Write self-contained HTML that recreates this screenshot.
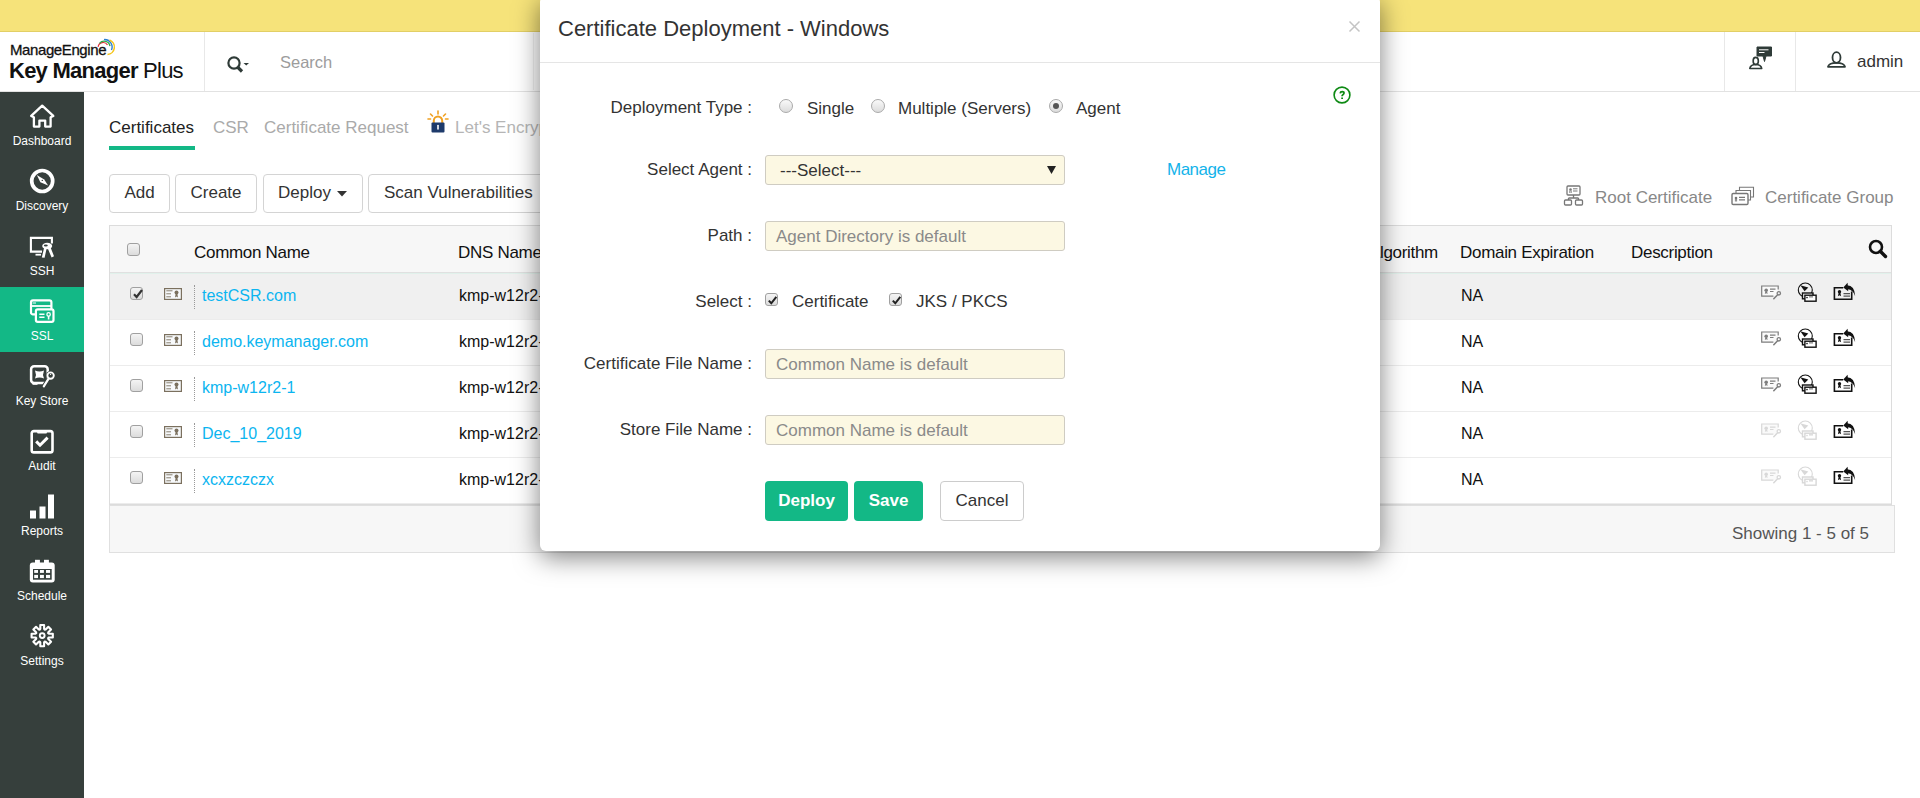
<!DOCTYPE html>
<html><head><meta charset="utf-8">
<style>
*{box-sizing:border-box;margin:0;padding:0}
html,body{width:1920px;height:798px;overflow:hidden;background:#fff;font-family:"Liberation Sans",sans-serif;color:#222;position:relative}
.abs{position:absolute}
svg{position:absolute;overflow:visible}
#ybar{left:0;top:0;width:1920px;height:32px;background:#f6e37a;border-bottom:1px solid #e2cf66}
#hdr{left:0;top:32px;width:1920px;height:60px;background:#fff;border-bottom:1px solid #e2e2e2}
#side{left:0;top:92px;width:84px;height:706px;background:#363f3c}
.nav{position:absolute;left:0;width:84px;height:65px;color:#fff;font-size:12px;text-align:center}
.nav span{position:absolute;left:0;width:84px;text-align:center}
.nav.act{background:#13b886}
.tab{position:absolute;top:118px;font-size:17px;color:#aaa;white-space:nowrap}
.btn{position:absolute;top:174px;height:39px;border:1px solid #d4d4d4;border-radius:4px;background:#fff;font-size:17px;color:#333;line-height:35px;text-align:center;white-space:nowrap}
#tbl{left:109px;top:225px;width:1783px;height:280px;border:1px solid #dcdcdc;background:#fff}
#thead{left:0;top:0;width:1781px;height:47px;background:#f7f7f7;border-bottom:1px solid #e0e0e0;box-shadow:0 1px 0 #e1f1eb}
.row{position:absolute;left:0;width:1781px;height:46px;border-bottom:1px solid #ececec}
.row.sel{background:#f0f0f0}
.th{position:absolute;font-size:17px;color:#111;top:16.5px;white-space:nowrap;letter-spacing:-0.3px}
.td{position:absolute;font-size:16px;color:#111;top:12.5px;white-space:nowrap}
.lnk{color:#0bb5f0}
.cb{position:absolute;width:13px;height:13px;border:1px solid #a0a0a0;border-radius:3px;background:linear-gradient(#f4f4f4,#dcdcdc)}
.sep{position:absolute;left:84px;top:11px;width:0;height:24px;border-left:1px dotted #999}
#foot{left:109px;top:505px;width:1786px;height:48px;background:#f7f7f7;border:1px solid #e0e0e0}
#modal{left:540px;top:-4px;width:840px;height:555px;background:#fff;border-radius:6px;box-shadow:0 6px 26px rgba(0,0,0,.5)}
.lbl{position:absolute;font-size:17px;color:#333;white-space:nowrap;text-align:right;width:300px}
.inp{position:absolute;left:225px;width:300px;height:30px;background:#fcf8e3;border:1px solid #cfccc2;border-radius:3px;font-size:17px;color:#8a8a8a;padding-left:10px;line-height:29px;white-space:nowrap}
.gbtn{position:absolute;top:487px;height:40px;background:#13b886;border-radius:4px;color:#fff;font-size:17px;font-weight:bold;text-align:center;line-height:40px}
.rad{position:absolute;width:14px;height:14px;border-radius:50%;border:1px solid #aaa;background:linear-gradient(#fafafa,#dcdcdc)}
.opt{position:absolute;font-size:17px;color:#333;white-space:nowrap}
</style></head><body>
<div id="ybar" class="abs"></div>
<div id="hdr" class="abs">
  <div class="abs" style="left:204px;top:0;width:1px;height:59px;background:#e8e8e8"></div>
  <div class="abs" id="me" style="left:10px;top:9px;font-size:15px;color:#111;letter-spacing:-0.4px;-webkit-text-stroke:0.3px #111">ManageEngine</div>
  <svg style="left:90px;top:4px" width="30" height="24" viewBox="0 0 30 24"><path d="M8.1 10.8 A5.1 5.1 0 0 1 17.5 9" fill="none" stroke="#e0303a" stroke-width="1.2"/><path d="M9.5 7.4 A6 6 0 0 1 20 10.2" fill="none" stroke="#2fa84a" stroke-width="1.3"/><path d="M14 3.6 A7.5 7.5 0 0 1 21.5 14" fill="none" stroke="#2b7fd0" stroke-width="1.4"/><path d="M19.5 4 A7.5 7.5 0 0 1 17.5 18.5" fill="none" stroke="#f5c518" stroke-width="1.5"/></svg>
  <div class="abs" id="kmp" style="left:9px;top:26px;font-size:22px;color:#111;letter-spacing:-0.75px;white-space:nowrap"><b>Key Manager</b> Plus</div>
  <svg style="left:226px;top:23px" width="26" height="20" viewBox="0 0 26 20"><circle cx="8" cy="8" r="5.6" fill="none" stroke="#2f3b38" stroke-width="2.2"/><path d="M11.5 12 L16 16.5" stroke="#2f3b38" stroke-width="3.2"/><path d="M17.5 8 H23 L20.25 10.6 Z" fill="#2f3b38"/></svg>
  <div class="abs" style="left:280px;top:21px;font-size:16.5px;color:#9c9c9c">Search</div>
  <div class="abs" style="left:533px;top:1px;width:1px;height:57px;background:#f0f0f0"></div>
  <div class="abs" style="left:1724px;top:0;width:1px;height:59px;background:#e8e8e8"></div>
  <div class="abs" style="left:1795px;top:0;width:1px;height:59px;background:#e8e8e8"></div>
  <svg style="left:1748px;top:14px" width="26" height="24" viewBox="0 0 26 24"><path d="M9 1 H23.5 V10 H18 L16.5 15.5 L15 10 H9 Z" fill="#2f3b38" stroke="#2f3b38" stroke-width="1" stroke-linejoin="round"/><path d="M11 3.8 H20.5 M11 6.5 H16.5" stroke="#fff" stroke-width="1"/><ellipse cx="7.75" cy="15" rx="2.6" ry="3.6" fill="none" stroke="#2f3b38" stroke-width="1.6"/><path d="M1.8 22.5 Q2.5 18.5 7.75 18.5 Q13 18.5 13.7 22.5 Z" fill="none" stroke="#2f3b38" stroke-width="1.6" stroke-linejoin="round"/></svg>
  <svg style="left:1826px;top:18px" width="22" height="20" viewBox="0 0 22 20"><ellipse cx="10.5" cy="7.5" rx="4" ry="5.3" fill="none" stroke="#2f3b38" stroke-width="1.8"/><path d="M2 16.8 Q2.8 12.8 10.5 12.8 Q18.2 12.8 19 16.8 Z" fill="none" stroke="#2f3b38" stroke-width="1.8" stroke-linejoin="round"/></svg>
  <div class="abs" style="left:1857px;top:20px;font-size:17px;color:#333">admin</div>
</div>
<div id="side" class="abs">
  <div class="nav" style="top:0"><svg style="left:29px;top:11px" width="26" height="26" viewBox="0 0 26 26"><path d="M13.2 2.6 L2.2 12.9 L4.9 14.2 V23.6 H10.4 V17.6 H16.2 V23.6 H21.6 V14.2 L24.3 12.9 Z" fill="none" stroke="#fff" stroke-width="2.3" stroke-linejoin="round"/></svg><span style="top:42px">Dashboard</span></div>
  <div class="nav" style="top:65px"><svg style="left:29px;top:11px" width="26" height="26" viewBox="0 0 26 26"><circle cx="13.2" cy="13" r="10.5" fill="none" stroke="#fff" stroke-width="3.7"/><path d="M7.8 7 L15.2 11.4 L19.1 17.6 L11.4 14.2 Z" fill="#fff"/><circle cx="13.3" cy="12.4" r="0.7" fill="#363f3c"/></svg><span style="top:42px">Discovery</span></div>
  <div class="nav" style="top:130px"><svg style="left:29px;top:11px" width="26" height="26" viewBox="0 0 26 26"><path d="M13 18.6 H1.9 V4.9 H22.9 V10.5" fill="none" stroke="#fff" stroke-width="2.1"/><path d="M6.5 21.7 H12" stroke="#fff" stroke-width="1.8"/><ellipse cx="18.2" cy="13" rx="5" ry="3.2" fill="#fff"/><ellipse cx="16.8" cy="12.6" rx="2" ry="1" fill="#363f3c"/><path d="M15.2 14.5 L12.8 24.5 L15.6 24.8 L17.6 15.5 Z M18.6 15 L22.6 24.6 L25 23.2 L21.4 14 Z" fill="#fff"/></svg><span style="top:42px">SSH</span></div>
  <div class="nav act" style="top:195px"><svg style="left:29px;top:11px" width="28" height="28" viewBox="0 0 28 28"><rect x="2" y="2.3" width="20.4" height="14.1" rx="2" fill="none" stroke="#fff" stroke-width="2.2"/><path d="M2.5 8 H22" stroke="#fff" stroke-width="1.8"/><path d="M3.6 5 H7" stroke="#fff" stroke-width="1"/><rect x="6.9" y="11.3" width="17.6" height="12.5" rx="1.8" fill="#13b886" stroke="#fff" stroke-width="2.2"/><path d="M10.3 16.2 H15.5 M10.3 19.2 H15.5" stroke="#fff" stroke-width="1.4"/><circle cx="19.6" cy="16.4" r="1.7" fill="none" stroke="#fff" stroke-width="1.3"/><path d="M19.6 18 V21.5" stroke="#fff" stroke-width="1.6"/></svg><span style="top:42px">SSL</span></div>
  <div class="nav" style="top:260px"><svg style="left:29px;top:11px" width="26" height="26" viewBox="0 0 26 26"><rect x="2.1" y="3.3" width="16.6" height="16.6" rx="3" fill="none" stroke="#fff" stroke-width="2.5"/><path d="M3.5 21 H8.5" stroke="#fff" stroke-width="1.6"/><path d="M6 7.5 Q10.5 9.3 15 7.5 Q13.2 11.5 15 15.5 Q10.5 13.7 6 15.5 Q7.8 11.5 6 7.5 Z" fill="#fff"/><path d="M19.5 15.8 L14.5 23.8" stroke="#363f3c" stroke-width="4.2" stroke-linecap="round"/><circle cx="21.6" cy="12.6" r="4.6" fill="#363f3c"/><circle cx="21.6" cy="12.6" r="3.2" fill="none" stroke="#fff" stroke-width="1.9"/><path d="M19.6 15.6 L14.8 23.4" stroke="#fff" stroke-width="2.2" stroke-linecap="round"/><path d="M21.6 10.8 V12" stroke="#fff" stroke-width="1"/></svg><span style="top:42px">Key Store</span></div>
  <div class="nav" style="top:325px"><svg style="left:29px;top:11px" width="26" height="26" viewBox="0 0 26 26"><rect x="2.7" y="3.1" width="20.8" height="21.3" rx="2.2" fill="none" stroke="#fff" stroke-width="2.6"/><path d="M7.8 3.5 H18.3 L17.5 5.6 H8.6 Z" fill="#fff"/><path d="M7.2 13.4 L11 17.2 L18.6 9.6" fill="none" stroke="#fff" stroke-width="3"/></svg><span style="top:42px">Audit</span></div>
  <div class="nav" style="top:390px"><svg style="left:29px;top:11px" width="26" height="26" viewBox="0 0 26 26"><rect x="1" y="17.5" width="6" height="8" fill="#fff"/><rect x="10.5" y="13.5" width="6" height="12" fill="#fff"/><rect x="19" y="1.5" width="6" height="24" fill="#fff"/></svg><span style="top:42px">Reports</span></div>
  <div class="nav" style="top:455px"><svg style="left:29px;top:11px" width="26" height="26" viewBox="0 0 26 26"><rect x="0.8" y="4.4" width="24.9" height="20.1" rx="3" fill="#fff"/><rect x="4" y="11" width="18.7" height="10.7" fill="#363f3c"/><g fill="#fff"><rect x="5.2" y="12" width="3.8" height="2.9"/><rect x="11" y="12" width="3.9" height="2.9"/><rect x="17" y="12" width="4.1" height="2.9"/><rect x="5.2" y="16.9" width="3.8" height="3.2"/><rect x="11" y="16.9" width="3.9" height="3.2"/><rect x="17" y="16.9" width="4.1" height="3.2"/><rect x="6" y="1.8" width="4.9" height="6.2"/><rect x="15" y="1.8" width="4.9" height="6.2"/></g></svg><span style="top:42px">Schedule</span></div>
  <div class="nav" style="top:520px"><svg style="left:29px;top:11px" width="26" height="26" viewBox="0 0 26 26"><path d="M11.30 5.86 L11.30 1.97 L15.10 1.97 L15.10 5.86 L15.65 6.69 L16.62 6.49 L19.37 3.74 L22.06 6.43 L19.31 9.18 L19.11 10.15 L19.94 10.70 L23.83 10.70 L23.83 14.50 L19.94 14.50 L19.11 15.05 L19.31 16.02 L22.06 18.77 L19.37 21.46 L16.62 18.71 L15.65 18.51 L15.10 19.34 L15.10 23.23 L11.30 23.23 L11.30 19.34 L10.75 18.51 L9.78 18.71 L7.03 21.46 L4.34 18.77 L7.09 16.02 L7.29 15.05 L6.46 14.50 L2.57 14.50 L2.57 10.70 L6.46 10.70 L7.29 10.15 L7.09 9.18 L4.34 6.43 L7.03 3.74 L9.78 6.49 L10.75 6.69 Z" fill="none" stroke="#fff" stroke-width="2.1" stroke-linejoin="round"/><circle cx="13.2" cy="12.6" r="2.4" fill="none" stroke="#fff" stroke-width="1.9"/></svg><span style="top:42px">Settings</span></div>
</div>
<div class="tab" style="left:109px;color:#222">Certificates</div>
<div class="abs" style="left:109px;top:146px;width:86px;height:4px;background:#13b886"></div>
<div class="tab" style="left:213px">CSR</div>
<div class="tab" style="left:264px">Certificate Request</div>
<svg style="left:427px;top:110px" width="22" height="24" viewBox="0 0 22 24"><g stroke="#f0a020" stroke-width="1.6" stroke-linecap="round"><path d="M11 1 V4"/><path d="M3.5 4 L5.5 6"/><path d="M18.5 4 L16.5 6"/><path d="M1 9 H3.5"/><path d="M18.5 9 H21"/></g><path d="M6.8 13 V10.8 A4.2 4.2 0 0 1 15.2 10.8 V13" fill="none" stroke="#f0a020" stroke-width="2"/><rect x="4.5" y="12.5" width="13" height="10" rx="1" fill="#1e3a6b"/><path d="M11 15.5 V19" stroke="#fff" stroke-width="1.6" stroke-linecap="round"/></svg><div class="tab" style="left:455px;color:#b5b5b5">Let's Encrypt</div>

<div class="btn" style="left:109px;width:61px">Add</div>
<div class="btn" style="left:175px;width:82px">Create</div>
<div class="btn" style="left:263px;width:100px;text-align:left;padding-left:14px">Deploy<svg style="left:73px;top:16px" width="10" height="6" viewBox="0 0 10 6"><path d="M0 0 H10 L5 5.5 Z" fill="#333"/></svg></div>
<div class="btn" style="left:368px;width:190px;text-align:left;padding-left:15px">Scan Vulnerabilities</div>

<svg style="left:1563px;top:185px" width="22" height="21" viewBox="0 0 22 21"><rect x="4" y="1" width="13" height="9" rx="1" fill="none" stroke="#777" stroke-width="1.3"/><circle cx="7.5" cy="4.5" r="1.3" fill="#777"/><path d="M6.8 5.5 V8 M8.2 5.5 V8" stroke="#777" stroke-width="0.9"/><path d="M10 3.8 H14.5 M10 6 H14.5" stroke="#777" stroke-width="1"/><path d="M10.5 10 V13 M5.5 13 H15.5 M5.5 13 V15 M15.5 13 V15" fill="none" stroke="#777" stroke-width="1.3"/><rect x="1.5" y="15" width="7" height="5" rx="1" fill="none" stroke="#777" stroke-width="1.3"/><rect x="12.5" y="15" width="7" height="5" rx="1" fill="none" stroke="#777" stroke-width="1.3"/></svg><div class="abs" style="left:1595px;top:188px;font-size:17px;color:#888">Root Certificate</div>
<svg style="left:1731px;top:186px" width="25" height="20" viewBox="0 0 25 20"><path d="M8.5 4.5 V1.2 H22.5 V11 H20" fill="none" stroke="#777" stroke-width="1.1"/><path d="M5 7.5 V4.5 H19.5 V14 H17" fill="none" stroke="#777" stroke-width="1.1"/><rect x="1" y="7.5" width="16" height="11" rx="1.2" fill="#fff" stroke="#777" stroke-width="1.4"/><circle cx="5" cy="12" r="1.3" fill="#777"/><path d="M4.4 13 V15.5 M5.6 13 V15.5" stroke="#777" stroke-width="0.9"/><path d="M8 11.3 H14 M8 13.8 H14" stroke="#777" stroke-width="1.2"/></svg><div class="abs" style="left:1765px;top:188px;font-size:17px;color:#888">Certificate Group</div>

<div id="tbl" class="abs">
  <div id="thead" class="abs">
    <div class="cb" style="left:17px;top:17px"></div>
    <div class="th" style="left:84px">Common Name</div>
    <div class="th" style="left:348px">DNS Name</div>
    <div class="th" style="left:1227px">Key Algorithm</div>
    <div class="th" style="left:1350px">Domain Expiration</div>
    <div class="th" style="left:1521px">Description</div>
    <svg style="left:1758px;top:13px" width="20" height="20" viewBox="0 0 20 20"><circle cx="8" cy="8" r="6" fill="none" stroke="#111" stroke-width="2.6"/><path d="M12.3 12.3 L17.5 17.5" stroke="#111" stroke-width="3.4" stroke-linecap="round"/></svg>
  </div>
    <div class="row sel" style="top:48px">
    <div class="cb" style="left:20px;top:13px"><svg style="left:1px;top:0px" width="12" height="12" viewBox="0 0 12 12"><path d="M2 6.3 L4.6 9 L10 2" fill="none" stroke="#333" stroke-width="2.2"/></svg></div>
    <svg style="left:54px;top:14px" width="18" height="12" viewBox="0 0 18 12"><rect x="0.6" y="0.6" width="16.8" height="10.8" fill="#f7f9fb" stroke="#7b705e" stroke-width="1.2"/><path d="M2.3 2.8 H8.5 M2.3 5.8 H7 M2.3 8.8 H7" stroke="#7b705e" stroke-width="0.9"/><circle cx="12.5" cy="4.5" r="2" fill="#7b705e"/><path d="M11.6 6 L11 9.5 L12.5 8.5 L14 9.5 L13.4 6 Z" fill="#7b705e"/></svg>
    <div class="sep"></div>
    <div class="td lnk" style="left:92px">testCSR.com</div>
    <div class="td" style="left:349px">kmp-w12r2-1.keymanager.com</div>
    <div class="td" style="left:1351px">NA</div>
    <svg style="left:1650px;top:10px" width="22" height="18" viewBox="0 0 22 18"><rect x="2" y="2.3" width="16" height="9.6" fill="#fafafa"/><path d="M13.4 12.2 H1.7 V2 H18.2 V5.6" fill="none" stroke="#7d7d7d" stroke-width="1.2"/><circle cx="6.2" cy="6.2" r="1.8" fill="#7d7d7d"/><path d="M5.3 7.5 L4.8 10 L6.2 9.2 L7.6 10 L7.1 7.5 Z" fill="#7d7d7d"/><path d="M10 5.1 H15.5 M10 7.5 H13.5" stroke="#7d7d7d" stroke-width="1.1"/><circle cx="18.8" cy="9.3" r="1.7" fill="none" stroke="#7d7d7d" stroke-width="1.3"/><path d="M17.6 10.7 L13.8 14.8" stroke="#7d7d7d" stroke-width="1.5" stroke-linecap="round"/></svg><svg style="left:1686px;top:7px" width="22" height="22" viewBox="0 0 22 22"><circle cx="9.3" cy="9" r="7" fill="none" stroke="#111" stroke-width="1.1"/><path d="M4.3 4.3 L12.3 6.4 L8.6 10.3 Z" fill="#111"/><rect x="6.5" y="12" width="10.5" height="5.8" fill="#fff" stroke="#111" stroke-width="1.4"/><rect x="8.9" y="14.2" width="11.2" height="6" fill="#fff" stroke="#111" stroke-width="1.4"/><circle cx="11" cy="16.6" r="0.8" fill="#111"/><rect x="13" y="15.2" width="4" height="1.3" fill="#888"/></svg><svg style="left:1722px;top:7px" width="24" height="22" viewBox="0 0 24 22"><path d="M11.2 6.8 H2.4 V18.2 H19.7 V10.6" fill="none" stroke="#111" stroke-width="1.6"/><circle cx="7.5" cy="10.8" r="1.7" fill="#111"/><path d="M6.6 12 L5.9 15.3 L7.5 14.3 L9.1 15.3 L8.4 12 Z" fill="#111"/><path d="M11.5 12.6 H18 M11.5 15.1 H18" stroke="#555" stroke-width="1.1"/><path d="M11.3 6.4 L15.6 1.8 L16.2 10.2 Z" fill="#111"/><path d="M15 4.2 Q22.8 4.3 23.2 15.2 Q21.2 8.6 15.6 8.2 Z" fill="#111"/></svg>
  </div>
  <div class="row" style="top:94px">
    <div class="cb" style="left:20px;top:13px"></div>
    <svg style="left:54px;top:14px" width="18" height="12" viewBox="0 0 18 12"><rect x="0.6" y="0.6" width="16.8" height="10.8" fill="#f7f9fb" stroke="#7b705e" stroke-width="1.2"/><path d="M2.3 2.8 H8.5 M2.3 5.8 H7 M2.3 8.8 H7" stroke="#7b705e" stroke-width="0.9"/><circle cx="12.5" cy="4.5" r="2" fill="#7b705e"/><path d="M11.6 6 L11 9.5 L12.5 8.5 L14 9.5 L13.4 6 Z" fill="#7b705e"/></svg>
    <div class="sep"></div>
    <div class="td lnk" style="left:92px">demo.keymanager.com</div>
    <div class="td" style="left:349px">kmp-w12r2-1.keymanager.com</div>
    <div class="td" style="left:1351px">NA</div>
    <svg style="left:1650px;top:10px" width="22" height="18" viewBox="0 0 22 18"><rect x="2" y="2.3" width="16" height="9.6" fill="#fafafa"/><path d="M13.4 12.2 H1.7 V2 H18.2 V5.6" fill="none" stroke="#7d7d7d" stroke-width="1.2"/><circle cx="6.2" cy="6.2" r="1.8" fill="#7d7d7d"/><path d="M5.3 7.5 L4.8 10 L6.2 9.2 L7.6 10 L7.1 7.5 Z" fill="#7d7d7d"/><path d="M10 5.1 H15.5 M10 7.5 H13.5" stroke="#7d7d7d" stroke-width="1.1"/><circle cx="18.8" cy="9.3" r="1.7" fill="none" stroke="#7d7d7d" stroke-width="1.3"/><path d="M17.6 10.7 L13.8 14.8" stroke="#7d7d7d" stroke-width="1.5" stroke-linecap="round"/></svg><svg style="left:1686px;top:7px" width="22" height="22" viewBox="0 0 22 22"><circle cx="9.3" cy="9" r="7" fill="none" stroke="#111" stroke-width="1.1"/><path d="M4.3 4.3 L12.3 6.4 L8.6 10.3 Z" fill="#111"/><rect x="6.5" y="12" width="10.5" height="5.8" fill="#fff" stroke="#111" stroke-width="1.4"/><rect x="8.9" y="14.2" width="11.2" height="6" fill="#fff" stroke="#111" stroke-width="1.4"/><circle cx="11" cy="16.6" r="0.8" fill="#111"/><rect x="13" y="15.2" width="4" height="1.3" fill="#888"/></svg><svg style="left:1722px;top:7px" width="24" height="22" viewBox="0 0 24 22"><path d="M11.2 6.8 H2.4 V18.2 H19.7 V10.6" fill="none" stroke="#111" stroke-width="1.6"/><circle cx="7.5" cy="10.8" r="1.7" fill="#111"/><path d="M6.6 12 L5.9 15.3 L7.5 14.3 L9.1 15.3 L8.4 12 Z" fill="#111"/><path d="M11.5 12.6 H18 M11.5 15.1 H18" stroke="#555" stroke-width="1.1"/><path d="M11.3 6.4 L15.6 1.8 L16.2 10.2 Z" fill="#111"/><path d="M15 4.2 Q22.8 4.3 23.2 15.2 Q21.2 8.6 15.6 8.2 Z" fill="#111"/></svg>
  </div>
  <div class="row" style="top:140px">
    <div class="cb" style="left:20px;top:13px"></div>
    <svg style="left:54px;top:14px" width="18" height="12" viewBox="0 0 18 12"><rect x="0.6" y="0.6" width="16.8" height="10.8" fill="#f7f9fb" stroke="#7b705e" stroke-width="1.2"/><path d="M2.3 2.8 H8.5 M2.3 5.8 H7 M2.3 8.8 H7" stroke="#7b705e" stroke-width="0.9"/><circle cx="12.5" cy="4.5" r="2" fill="#7b705e"/><path d="M11.6 6 L11 9.5 L12.5 8.5 L14 9.5 L13.4 6 Z" fill="#7b705e"/></svg>
    <div class="sep"></div>
    <div class="td lnk" style="left:92px">kmp-w12r2-1</div>
    <div class="td" style="left:349px">kmp-w12r2-1.keymanager.com</div>
    <div class="td" style="left:1351px">NA</div>
    <svg style="left:1650px;top:10px" width="22" height="18" viewBox="0 0 22 18"><rect x="2" y="2.3" width="16" height="9.6" fill="#fafafa"/><path d="M13.4 12.2 H1.7 V2 H18.2 V5.6" fill="none" stroke="#7d7d7d" stroke-width="1.2"/><circle cx="6.2" cy="6.2" r="1.8" fill="#7d7d7d"/><path d="M5.3 7.5 L4.8 10 L6.2 9.2 L7.6 10 L7.1 7.5 Z" fill="#7d7d7d"/><path d="M10 5.1 H15.5 M10 7.5 H13.5" stroke="#7d7d7d" stroke-width="1.1"/><circle cx="18.8" cy="9.3" r="1.7" fill="none" stroke="#7d7d7d" stroke-width="1.3"/><path d="M17.6 10.7 L13.8 14.8" stroke="#7d7d7d" stroke-width="1.5" stroke-linecap="round"/></svg><svg style="left:1686px;top:7px" width="22" height="22" viewBox="0 0 22 22"><circle cx="9.3" cy="9" r="7" fill="none" stroke="#111" stroke-width="1.1"/><path d="M4.3 4.3 L12.3 6.4 L8.6 10.3 Z" fill="#111"/><rect x="6.5" y="12" width="10.5" height="5.8" fill="#fff" stroke="#111" stroke-width="1.4"/><rect x="8.9" y="14.2" width="11.2" height="6" fill="#fff" stroke="#111" stroke-width="1.4"/><circle cx="11" cy="16.6" r="0.8" fill="#111"/><rect x="13" y="15.2" width="4" height="1.3" fill="#888"/></svg><svg style="left:1722px;top:7px" width="24" height="22" viewBox="0 0 24 22"><path d="M11.2 6.8 H2.4 V18.2 H19.7 V10.6" fill="none" stroke="#111" stroke-width="1.6"/><circle cx="7.5" cy="10.8" r="1.7" fill="#111"/><path d="M6.6 12 L5.9 15.3 L7.5 14.3 L9.1 15.3 L8.4 12 Z" fill="#111"/><path d="M11.5 12.6 H18 M11.5 15.1 H18" stroke="#555" stroke-width="1.1"/><path d="M11.3 6.4 L15.6 1.8 L16.2 10.2 Z" fill="#111"/><path d="M15 4.2 Q22.8 4.3 23.2 15.2 Q21.2 8.6 15.6 8.2 Z" fill="#111"/></svg>
  </div>
  <div class="row" style="top:186px">
    <div class="cb" style="left:20px;top:13px"></div>
    <svg style="left:54px;top:14px" width="18" height="12" viewBox="0 0 18 12"><rect x="0.6" y="0.6" width="16.8" height="10.8" fill="#f7f9fb" stroke="#7b705e" stroke-width="1.2"/><path d="M2.3 2.8 H8.5 M2.3 5.8 H7 M2.3 8.8 H7" stroke="#7b705e" stroke-width="0.9"/><circle cx="12.5" cy="4.5" r="2" fill="#7b705e"/><path d="M11.6 6 L11 9.5 L12.5 8.5 L14 9.5 L13.4 6 Z" fill="#7b705e"/></svg>
    <div class="sep"></div>
    <div class="td lnk" style="left:92px">Dec_10_2019</div>
    <div class="td" style="left:349px">kmp-w12r2-1.keymanager.com</div>
    <div class="td" style="left:1351px">NA</div>
    <svg style="left:1650px;top:10px" width="22" height="18" viewBox="0 0 22 18"><rect x="2" y="2.3" width="16" height="9.6" fill="#fafafa"/><path d="M13.4 12.2 H1.7 V2 H18.2 V5.6" fill="none" stroke="#d8d8d8" stroke-width="1.2"/><circle cx="6.2" cy="6.2" r="1.8" fill="#d8d8d8"/><path d="M5.3 7.5 L4.8 10 L6.2 9.2 L7.6 10 L7.1 7.5 Z" fill="#d8d8d8"/><path d="M10 5.1 H15.5 M10 7.5 H13.5" stroke="#d8d8d8" stroke-width="1.1"/><circle cx="18.8" cy="9.3" r="1.7" fill="none" stroke="#d8d8d8" stroke-width="1.3"/><path d="M17.6 10.7 L13.8 14.8" stroke="#d8d8d8" stroke-width="1.5" stroke-linecap="round"/></svg><svg style="left:1686px;top:7px" width="22" height="22" viewBox="0 0 22 22"><circle cx="9.3" cy="9" r="7" fill="none" stroke="#d8d8d8" stroke-width="1.1"/><path d="M4.3 4.3 L12.3 6.4 L8.6 10.3 Z" fill="#d8d8d8"/><rect x="6.5" y="12" width="10.5" height="5.8" fill="#fff" stroke="#d8d8d8" stroke-width="1.4"/><rect x="8.9" y="14.2" width="11.2" height="6" fill="#fff" stroke="#d8d8d8" stroke-width="1.4"/><circle cx="11" cy="16.6" r="0.8" fill="#d8d8d8"/><rect x="13" y="15.2" width="4" height="1.3" fill="#d8d8d8"/></svg><svg style="left:1722px;top:7px" width="24" height="22" viewBox="0 0 24 22"><path d="M11.2 6.8 H2.4 V18.2 H19.7 V10.6" fill="none" stroke="#111" stroke-width="1.6"/><circle cx="7.5" cy="10.8" r="1.7" fill="#111"/><path d="M6.6 12 L5.9 15.3 L7.5 14.3 L9.1 15.3 L8.4 12 Z" fill="#111"/><path d="M11.5 12.6 H18 M11.5 15.1 H18" stroke="#555" stroke-width="1.1"/><path d="M11.3 6.4 L15.6 1.8 L16.2 10.2 Z" fill="#111"/><path d="M15 4.2 Q22.8 4.3 23.2 15.2 Q21.2 8.6 15.6 8.2 Z" fill="#111"/></svg>
  </div>
  <div class="row" style="top:232px">
    <div class="cb" style="left:20px;top:13px"></div>
    <svg style="left:54px;top:14px" width="18" height="12" viewBox="0 0 18 12"><rect x="0.6" y="0.6" width="16.8" height="10.8" fill="#f7f9fb" stroke="#7b705e" stroke-width="1.2"/><path d="M2.3 2.8 H8.5 M2.3 5.8 H7 M2.3 8.8 H7" stroke="#7b705e" stroke-width="0.9"/><circle cx="12.5" cy="4.5" r="2" fill="#7b705e"/><path d="M11.6 6 L11 9.5 L12.5 8.5 L14 9.5 L13.4 6 Z" fill="#7b705e"/></svg>
    <div class="sep"></div>
    <div class="td lnk" style="left:92px">xcxzczczx</div>
    <div class="td" style="left:349px">kmp-w12r2-1.keymanager.com</div>
    <div class="td" style="left:1351px">NA</div>
    <svg style="left:1650px;top:10px" width="22" height="18" viewBox="0 0 22 18"><rect x="2" y="2.3" width="16" height="9.6" fill="#fafafa"/><path d="M13.4 12.2 H1.7 V2 H18.2 V5.6" fill="none" stroke="#d8d8d8" stroke-width="1.2"/><circle cx="6.2" cy="6.2" r="1.8" fill="#d8d8d8"/><path d="M5.3 7.5 L4.8 10 L6.2 9.2 L7.6 10 L7.1 7.5 Z" fill="#d8d8d8"/><path d="M10 5.1 H15.5 M10 7.5 H13.5" stroke="#d8d8d8" stroke-width="1.1"/><circle cx="18.8" cy="9.3" r="1.7" fill="none" stroke="#d8d8d8" stroke-width="1.3"/><path d="M17.6 10.7 L13.8 14.8" stroke="#d8d8d8" stroke-width="1.5" stroke-linecap="round"/></svg><svg style="left:1686px;top:7px" width="22" height="22" viewBox="0 0 22 22"><circle cx="9.3" cy="9" r="7" fill="none" stroke="#d8d8d8" stroke-width="1.1"/><path d="M4.3 4.3 L12.3 6.4 L8.6 10.3 Z" fill="#d8d8d8"/><rect x="6.5" y="12" width="10.5" height="5.8" fill="#fff" stroke="#d8d8d8" stroke-width="1.4"/><rect x="8.9" y="14.2" width="11.2" height="6" fill="#fff" stroke="#d8d8d8" stroke-width="1.4"/><circle cx="11" cy="16.6" r="0.8" fill="#d8d8d8"/><rect x="13" y="15.2" width="4" height="1.3" fill="#d8d8d8"/></svg><svg style="left:1722px;top:7px" width="24" height="22" viewBox="0 0 24 22"><path d="M11.2 6.8 H2.4 V18.2 H19.7 V10.6" fill="none" stroke="#111" stroke-width="1.6"/><circle cx="7.5" cy="10.8" r="1.7" fill="#111"/><path d="M6.6 12 L5.9 15.3 L7.5 14.3 L9.1 15.3 L8.4 12 Z" fill="#111"/><path d="M11.5 12.6 H18 M11.5 15.1 H18" stroke="#555" stroke-width="1.1"/><path d="M11.3 6.4 L15.6 1.8 L16.2 10.2 Z" fill="#111"/><path d="M15 4.2 Q22.8 4.3 23.2 15.2 Q21.2 8.6 15.6 8.2 Z" fill="#111"/></svg>
  </div>
</div>
<div id="foot" class="abs"><div class="abs" style="right:25px;top:17.5px;font-size:17px;color:#555">Showing 1 - 5 of 5</div></div>

<div id="modal" class="abs">
  <div class="abs" style="left:18px;top:20px;font-size:22px;color:#333">Certificate Deployment - Windows</div>
  <svg style="left:809px;top:25px" width="11" height="11" viewBox="0 0 11 11"><path d="M0.5 0.5 L10.5 10.5 M10.5 0.5 L0.5 10.5" stroke="#c4c4c4" stroke-width="1.5"/></svg>
  <div class="abs" style="left:0;top:66px;width:840px;height:1px;background:#e5e5e5"></div>
  <div class="lbl" style="left:-88px;top:101.5px">Deployment Type :</div>
  <div class="lbl" style="left:-88px;top:163.5px">Select Agent :</div>
  <div class="lbl" style="left:-88px;top:229.5px">Path :</div>
  <div class="lbl" style="left:-88px;top:295.5px">Select :</div>
  <div class="lbl" style="left:-88px;top:357.5px">Certificate File Name :</div>
  <div class="lbl" style="left:-88px;top:423.5px">Store File Name :</div>
  <div class="rad" style="left:239px;top:103px"></div>
  <div class="opt" style="left:267px;top:102.5px">Single</div>
  <div class="rad" style="left:331px;top:103px"></div>
  <div class="opt" style="left:358px;top:102.5px">Multiple (Servers)</div>
  <div class="rad" style="left:509px;top:103px"><div style="position:absolute;left:3px;top:3px;width:6px;height:6px;border-radius:50%;background:#555"></div></div>
  <div class="opt" style="left:536px;top:102.5px">Agent</div>
  <svg style="left:793px;top:89.5px" width="18" height="18" viewBox="0 0 18 18"><circle cx="9" cy="9" r="7.9" fill="none" stroke="#0e8a14" stroke-width="1.6"/><path d="M7.2 7.3 Q7.4 5.6 9.2 5.6 Q11 5.6 11 7.1 Q11 8.1 9.9 8.7 Q9.1 9.2 9.1 10.2" fill="none" stroke="#0e8a14" stroke-width="1.8"/><path d="M8.2 11.6 H10 V13 H8.2 Z" fill="#0e8a14"/></svg>
  <div class="inp" style="top:159px;color:#333;padding-left:14px">---Select---<svg style="left:281px;top:10px" width="9" height="8" viewBox="0 0 9 8"><path d="M0 0 H9 L4.5 8 Z" fill="#222"/></svg></div>
  <div class="abs" style="left:627px;top:163.5px;font-size:17px;color:#13b3ea;letter-spacing:-0.5px">Manage</div>
  <div class="inp" style="top:225px">Agent Directory is default</div>
  <div class="inp" style="top:353px">Common Name is default</div>
  <div class="inp" style="top:419px">Common Name is default</div>
  <div class="cb" style="left:225px;top:297px"><svg style="left:1px;top:1px" width="11" height="11" viewBox="0 0 11 11"><path d="M1.8 5.6 L4.3 8.3 L9.3 1.8" fill="none" stroke="#222" stroke-width="2"/></svg></div>
  <div class="opt" style="left:252px;top:296px">Certificate</div>
  <div class="cb" style="left:349px;top:297px"><svg style="left:1px;top:1px" width="11" height="11" viewBox="0 0 11 11"><path d="M1.8 5.6 L4.3 8.3 L9.3 1.8" fill="none" stroke="#222" stroke-width="2"/></svg></div>
  <div class="opt" style="left:376px;top:296px">JKS / PKCS</div>
  <div class="gbtn" style="left:225px;top:485px;width:83px">Deploy</div>
  <div class="gbtn" style="left:314px;top:485px;width:69px">Save</div>
  <div class="abs" style="left:400px;top:485px;width:84px;height:40px;border:1px solid #ccc;border-radius:4px;font-size:17px;color:#333;text-align:center;line-height:38px">Cancel</div>
</div>
</body></html>
